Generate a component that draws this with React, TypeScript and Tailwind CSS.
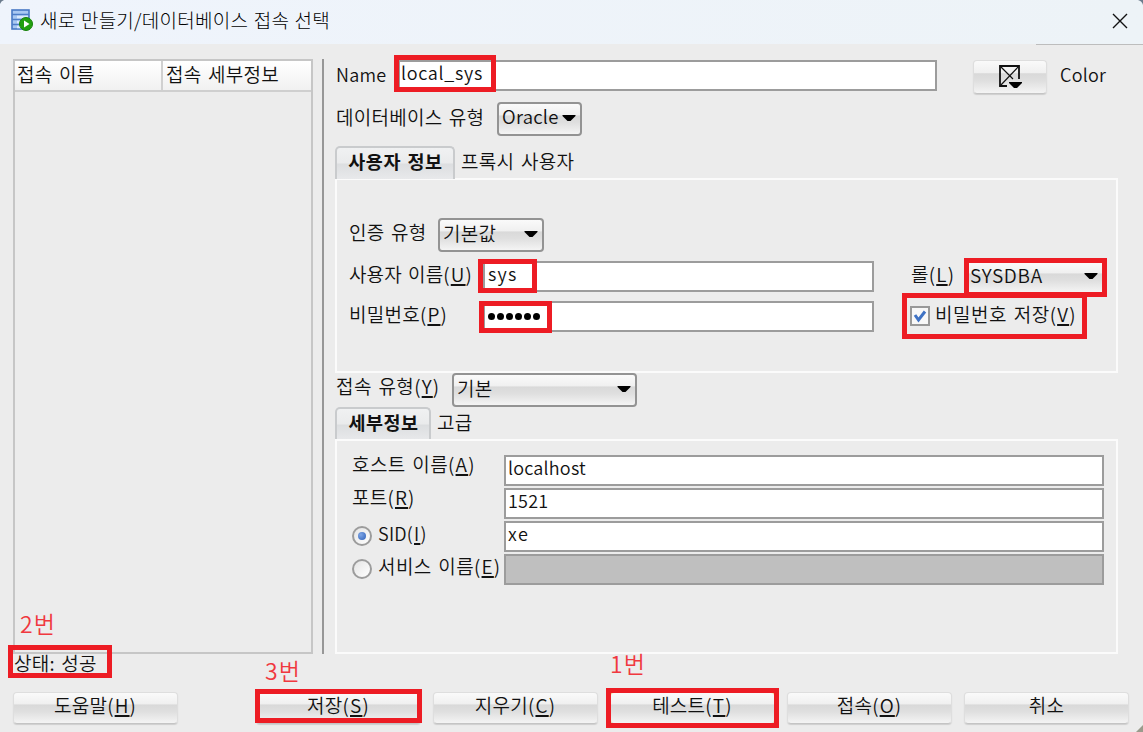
import type { ReactNode } from 'react';
import clsx from 'clsx';

const BUTTON_BG = 'bg-[linear-gradient(180deg,#fafafa_0%,#f0f0f0_36%,#d9d9d9_40%,#dfdfdf_62%,#f4f4f4_100%)]';

function Key({ children }: { children: string }) {
  return (
    <span className="tracking-[1.2px]">
      (<span className="underline decoration-[1.5px] underline-offset-[2px]">{children}</span>)
    </span>
  );
}

function Label({ children, className }: { children: ReactNode; className?: string }) {
  return <span className={clsx('block shrink-0 whitespace-pre leading-[22px]', className)}>{children}</span>;
}

function Field({ children, className }: { children?: ReactNode; className?: string }) {
  return (
    <div
      className={clsx(
        'shrink-0 border-2 border-[#9c9c9c] pl-[2px] text-[18px] leading-[20px] tracking-[0.2px]',
        className,
      )}
    >
      {children}
    </div>
  );
}

function Arrow() {
  return (
    <svg width="14" height="8" viewBox="0 0 14 8" className="shrink-0">
      <path d="M0.5 1h13v1L8.5 7h-3L0.5 2z" fill="#000" />
    </svg>
  );
}

function Select({ children, className }: { children: string; className?: string }) {
  return (
    <button
      className={clsx(
        'flex shrink-0 items-center justify-between rounded-[4px] border-2 border-[#939393] pl-[3px] pr-[4px] pb-[2px]',
        BUTTON_BG,
        className,
      )}
    >
      <span className="-mt-[2px]">{children}</span>
      <Arrow />
    </button>
  );
}

function PushButton({ children, className }: { children: ReactNode; className?: string }) {
  return (
    <button
      className={clsx(
        'h-[32px] w-[165px] shrink-0 rounded-[4px] border border-[#dedede] border-b-[#c4c4c4] pb-[7px] leading-[22px] shadow-[0_1px_1px_#cfcfcf]',
        BUTTON_BG,
        className,
      )}
    >
      {children}
    </button>
  );
}

function Tabs({ active, other, className }: { active: string; other: string; className: string }) {
  return (
    <div className="flex h-[32px]">
      <div
        className={clsx(
          'h-[33px] whitespace-nowrap rounded-t-[5px] border-2 border-b-0 border-[#c9cbcd] bg-[linear-gradient(180deg,#f0f1f2_0%,#eaebec_48%,#dcdee0_52%,#e8e9eb_100%)] pl-px text-center text-[18.5px] font-bold leading-[26px] tracking-[0.5px]',
          className,
        )}
      >
        {active}
      </div>
      <Label className="ml-[6px] mt-[4px] tracking-[0.3px]">{other}</Label>
    </div>
  );
}

function Radio({ checked }: { checked?: boolean }) {
  return (
    <span className="mb-[2px] flex size-[20px] shrink-0 items-center justify-center rounded-full border-2 border-[#9c9c9c] bg-[linear-gradient(135deg,#e4e4e4,#ffffff)]">
      {checked && <span className="size-[8px] rounded-full bg-[radial-gradient(circle_at_35%_35%,#7ea6e6,#2d5fb8)]" />}
    </span>
  );
}

// red frame drawn over a control
function Mark({ className }: { className: string }) {
  return <div className={clsx('pointer-events-none absolute border-[5px] border-[#ed1c24]', className)} />;
}

function Note({ children, className }: { children: string; className: string }) {
  return (
    <span className={clsx('absolute whitespace-nowrap text-[23px] leading-[28px] tracking-[1px] text-[#f0383f]', className)}>
      {children}
    </span>
  );
}

export default function App() {
  return (
    <div className="relative flex h-[732px] w-[1143px] flex-col overflow-hidden bg-[#ececec] font-['Noto_Sans_CJK_KR',sans-serif] text-[19px] font-[350] tracking-[0.25px] text-[#111] [word-spacing:2px]">
      <header className="flex h-[44px] shrink-0 items-center bg-gradient-to-r from-[#eff4fc] to-[#edf3f7] pb-[3px] pl-[11px] pr-[15px]">
        <svg width="23" height="23" viewBox="0 0 23 23">
          <rect x="1" y="1" width="17" height="19" fill="#a9c8f2" stroke="#4778c4" strokeWidth="1.6" />
          <path d="M1 5.5h17M1 10.5h17M1 15.5h17" stroke="#4d7dc7" strokeWidth="1.3" />
          <path d="M6 8h11M6 13h11M6 18h8" stroke="#d9e9fc" strokeWidth="2.5" />
          <circle cx="15" cy="15" r="6.5" fill="#22a010" stroke="#16810a" />
          <path d="M13 11.5v7l5.5-3.5z" fill="#fff" />
        </svg>
        <h1 className="ml-[6px] flex-1 text-[19px] font-light tracking-[0.25px] text-black [word-spacing:1px]">새로 만들기/데이터베이스 접속 선택</h1>
        <svg width="16" height="16" viewBox="0 0 16 16" stroke="#111" strokeWidth="1.4">
          <path d="M1 1l14 14M15 1L1 15" />
        </svg>
      </header>
      <div className="h-px w-[107px] shrink-0 self-end bg-[#bdbdbd]" />

      <main className="flex h-[610px] shrink-0 pl-[13px] pt-[14px]">
        <section className="h-[595px] w-[300px] shrink-0 border-2 border-[#c6c6c6]">
          <div className="flex h-[31px] border-b-2 border-[#cfcfcf] bg-gradient-to-b from-white to-[#f1f1f1] leading-[26px]">
            <div className="w-[148px] border-r-2 border-[#d0d0d0] pl-[2px]">접속 이름</div>
            <div className="pl-[3px]">접속 세부정보</div>
          </div>
        </section>
        <div className="ml-[9px] h-[595px] w-[2px] shrink-0 bg-[#979797]" />

        <section className="ml-[11px] flex w-[783px] flex-col">
          <div className="flex h-[36px] items-start">
            <Label className="w-[63px] pl-px pt-[4px] text-[18px]">Name</Label>
            <Field className="mt-px h-[31px] w-[539px] bg-white pl-px tracking-[0.7px]">local_sys</Field>
            <button
              className={clsx(
                'ml-[36px] mt-px flex h-[34px] w-[74px] shrink-0 items-center justify-center rounded-[4px] border border-[#dedede] border-b-[#c4c4c4] pb-[3px] shadow-[0_1px_1px_#cfcfcf]',
                BUTTON_BG,
              )}
            >
              <svg width="24" height="24" viewBox="0 0 24 24" fill="none" stroke="#111">
                <path d="M21 15V2H2v20h7" strokeWidth="1.8" />
                <path d="M2 2l13 13M21 2L2 22" strokeWidth="1.2" />
                <path d="M11 18h13v1l-5 5h-3l-5-5z" fill="#000" stroke="none" />
              </svg>
            </button>
            <Label className="ml-[13px] pt-[4px] text-[18px]">Color</Label>
          </div>

          <div className="mt-[7px] flex h-[34px] items-center">
            <Label className="w-[162px] pb-[5px] pl-px">데이터베이스 유형</Label>
            <Select className="h-[34px] w-[85px] text-[18.5px]">Oracle</Select>
          </div>

          <div className="mt-[10px]">
            <Tabs active="사용자 정보" other="프록시 사용자" className="w-[120px]" />
            <div className="h-[195px] border-2 border-[#fbfbfb] pl-[12px] pt-[38px]">
              <div className="flex h-[34px]">
                <Label className="w-[89px] pt-[3px]">인증 유형</Label>
                <Select className="h-[34px] w-[106px]">기본값</Select>
              </div>
              <div className="mt-[9px] flex h-[31px]">
                <Label className="w-[134px] pt-[2px] tracking-[0.1px]">사용자 이름<Key>U</Key></Label>
                <Field className="h-[31px] w-[391px] bg-white pl-[3px] tracking-[1.2px]">sys</Field>
                <Label className="ml-[37px] w-[54px] pt-[2px]">롤<Key>L</Key></Label>
                <Select className="-mt-px h-[34px] w-[141px] pr-[6px] tracking-[0.7px]">SYSDBA</Select>
              </div>
              <div className="mt-[9px] flex h-[31px]">
                <Label className="w-[134px] pt-[2px]">비밀번호<Key>P</Key></Label>
                <Field className="flex h-[31px] w-[391px] items-center gap-[2px] bg-white pl-[3px]">
                  {Array.from({ length: 6 }, (_, i) => (
                    <span key={i} className="size-[7px] rounded-full bg-black" />
                  ))}
                </Field>
                <div className="ml-[36px] flex items-start">
                  <span className="mt-[5px] flex size-[20px] items-center justify-center border-2 border-[#999] bg-[#f8f8f8]">
                    <svg width="14" height="14" viewBox="0 0 14 14" fill="none" stroke="#3f72c4" strokeWidth="3">
                      <path d="M2 6l3.5 5L12 2.5" />
                    </svg>
                  </span>
                  <Label className="ml-[5px] pt-[2px] tracking-[0.5px]">비밀번호 저장<Key>V</Key></Label>
                </div>
              </div>
            </div>
          </div>

          <div className="flex h-[34px]">
            <Label className="w-[117px] pl-px pt-[2px] tracking-[0.4px]">접속 유형<Key>Y</Key></Label>
            <Select className="h-[34px] w-[185px]">기본</Select>
          </div>

          <Tabs active="세부정보" other="고급" className="w-[96px]" />
          <div className="flex h-[215px] flex-col gap-[2px] border-2 border-[#fbfbfb] pl-[15px] pt-[14px]">
            <div className="flex h-[31px]">
              <Label className="-mt-[2px] w-[152px] tracking-[0.4px]">호스트 이름<Key>A</Key></Label>
              <Field className="h-[31px] w-[600px] bg-white">localhost</Field>
            </div>
            <div className="flex h-[31px]">
              <Label className="-mt-[2px] w-[152px]">포트<Key>R</Key></Label>
              <Field className="h-[31px] w-[600px] bg-white tracking-[-0.3px]">1521</Field>
            </div>
            <div className="flex h-[31px]">
              <div className="flex w-[152px] shrink-0 items-center">
                <Radio checked />
                <Label className="ml-[6px] pb-[7px] text-[18px]">SID<Key>I</Key></Label>
              </div>
              <Field className="h-[31px] w-[600px] bg-white tracking-[1.5px]">xe</Field>
            </div>
            <div className="flex h-[31px]">
              <div className="flex w-[152px] shrink-0 items-center">
                <Radio />
                <Label className="ml-[6px] pb-[7px] tracking-[0.4px]">서비스 이름<Key>E</Key></Label>
              </div>
              <Field className="h-[31px] w-[600px] bg-[#bfbfbf]" />
            </div>
          </div>
        </section>
      </main>

      <div className="h-[37px] shrink-0 pl-[14px] leading-[15px]">상태: 성공</div>

      <footer className="flex gap-[12px] pl-[13px]">
        <PushButton className="mr-[66px]">도움말<Key>H</Key></PushButton>
        <PushButton>저장<Key>S</Key></PushButton>
        <PushButton>지우기<Key>C</Key></PushButton>
        <PushButton className="border-[#edcf8c]">테스트<Key>T</Key></PushButton>
        <PushButton>접속<Key>O</Key></PushButton>
        <PushButton>취소</PushButton>
      </footer>

      <Mark className="left-[394px] top-[55px] h-[37px] w-[102px]" />
      <Mark className="left-[478px] top-[259px] h-[34px] w-[59px]" />
      <Mark className="left-[479px] top-[301px] h-[32px] w-[73px]" />
      <Mark className="left-[964px] top-[258px] h-[39px] w-[143px]" />
      <Mark className="left-[902px] top-[293px] h-[46px] w-[185px]" />
      <Mark className="left-[8px] top-[645px] h-[33px] w-[104px]" />
      <Mark className="left-[255px] top-[689px] h-[34px] w-[167px]" />
      <Mark className="left-[606px] top-[688px] h-[40px] w-[173px]" />

      <Note className="left-[20px] top-[609px]">2번</Note>
      <Note className="left-[265px] top-[656px]">3번</Note>
      <Note className="left-[610px] top-[649px]">1번</Note>

      <svg className="absolute bottom-0 right-0" width="7" height="7" viewBox="0 0 9 9">
        <path d="M9 0v9H0z" fill="#9a9b8c" />
      </svg>
      <svg className="absolute left-0 top-0" width="4" height="4" viewBox="0 0 4 4">
        <path d="M0 0h4Q1 1 0 4z" fill="#6b7b8c" />
      </svg>
      <svg className="absolute right-0 top-0" width="5" height="5" viewBox="0 0 5 5">
        <path d="M5 0H0Q4 1 5 5z" fill="#6b7b8c" />
      </svg>
    </div>
  );
}
